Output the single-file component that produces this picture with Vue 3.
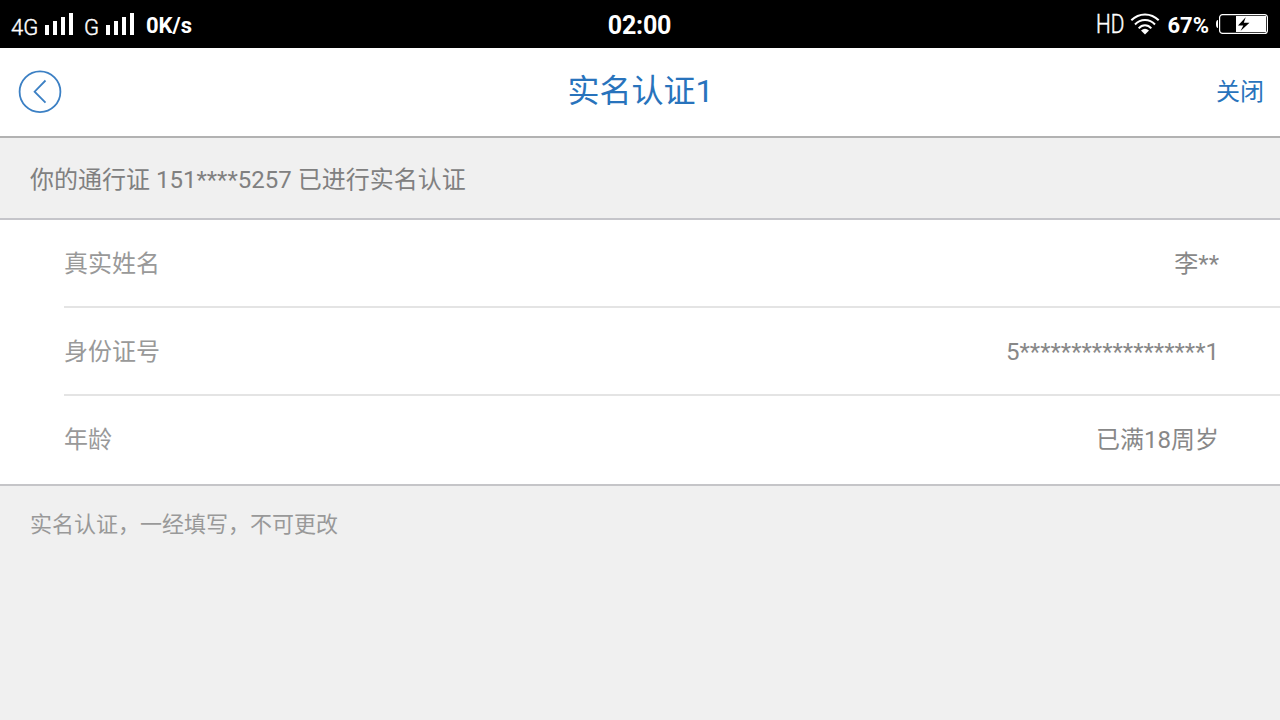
<template>
  <div class="screen">
    <header class="status">
      <div class="status-left">
        <span class="net net-4g">4G</span>
        <svg class="signal" width="29" height="22" viewBox="0 0 29 22">
          <path d="M0 12h4v10H0zM8 8h4v14H8zM16 4h4v18h-4zM24 0h4v22h-4z" />
        </svg>
        <span class="net net-g">G</span>
        <svg class="signal" width="29" height="22" viewBox="0 0 29 22">
          <path d="M0 12h4v10H0zM8 8h4v14H8zM16 4h4v18h-4zM24 0h4v22h-4z" />
        </svg>
        <span class="speed">0K/s</span>
      </div>
      <div class="clock">02:00</div>
      <div class="status-right">
        <span class="hd">HD</span>
        <svg class="wifi" width="30" height="22" viewBox="0 0 30 22">
          <g fill="none" stroke="#fff" stroke-width="2">
            <path d="M1.3 7.3C9 -.6 21 -.6 28.7 7.3" />
            <path d="M5 11.5C10.6 5.6 19.4 5.6 25 11.5" />
            <path d="M8.7 15.4C12.3 11.3 17.7 11.3 21.3 15.4" />
          </g>
          <path d="M11 17.6Q15 14 19 17.6L15 21.5z" fill="#fff" />
        </svg>
        <span class="percent">67%</span>
        <svg class="battery" width="52" height="22" viewBox="0 0 52 22">
          <path d="M2 7Q0 7 0 11T2 15z" fill="#fff" />
          <rect x="3.6" y="1.6" width="47.8" height="18.8" rx="3" fill="none" stroke="#fff" stroke-width="1.2" />
          <path d="M20 3h30v16H20z" fill="#fff" />
          <path d="M29.7 4.2L22 12.4h5.3L24.5 18L33.5 9.7h-5.7z" fill="#000" />
        </svg>
      </div>
    </header>

    <nav class="navbar">
      <button class="back" aria-label="返回">
        <svg width="44" height="44" viewBox="0 0 44 44">
          <circle cx="22" cy="21.7" r="20.4" />
          <path d="M27.5 10.5L16.6 21.7L27.5 32.7" />
        </svg>
      </button>
      <h1 class="title">实名认证1</h1>
      <button class="close">关闭</button>
    </nav>

    <p class="notice">你的通行证 151****5257 已进行实名认证</p>

    <ul class="list">
      <li v-for="row in rows" :key="row.label" class="row">
        <span class="label">{{ row.label }}</span>
        <span class="value">{{ row.value }}</span>
      </li>
    </ul>

    <p class="hint">实名认证，一经填写，不可更改</p>
  </div>
</template>

<script setup>
const rows = [
  { label: "真实姓名", value: "李**" },
  { label: "身份证号", value: "5" + "*".repeat(18) + "1" },
  { label: "年龄", value: "已满18周岁" },
];
</script>

<style>
body {
  margin: 0;
  background: #f0f0f0;
}
</style>

<style scoped>
.screen {
  height: 720px;
  overflow: hidden;
  background: #f0f0f0;
  font-family: Roboto, "Noto Sans CJK SC", sans-serif;
}

.status {
  display: grid;
  grid-template-rows: 48px;
  grid-template-columns: 1fr auto 1fr;
  align-items: center;
  box-sizing: border-box;
  height: 48px;
  padding: 0 12px 0 11px;
  background: #000;
  color: #fff;
  line-height: 48px;
}

.status-left,
.status-right {
  display: flex;
  align-items: center;
  height: 48px;
}

.status-right {
  justify-content: flex-end;
}

.net {
  height: 48px;
  padding-top: 7px;
  box-sizing: border-box;
  font-size: 22px;
  font-weight: 300;
  line-height: 42px;
  -webkit-text-stroke: 0.4px #fff;
}

.net-4g {
  width: 34px;
}

.net-g {
  width: 22px;
  margin-left: 10px;
}

.signal {
  fill: #fff;
}

.speed {
  margin-left: 11px;
  padding-top: 4px;
  font-size: 22px;
  font-weight: 700;
}

.clock {
  padding-top: 4px;
  font-size: 25px;
  font-weight: 700;
  letter-spacing: -0.2px;
}

.hd {
  font-size: 26px;
  font-weight: 300;
  transform: scaleX(0.8);
  transform-origin: right;
  -webkit-text-stroke: 0.5px #fff;
}

.wifi {
  margin-left: 6px;
}

.percent {
  margin-left: 7px;
  padding-top: 4px;
  font-size: 22px;
  font-weight: 700;
}

.battery {
  margin-left: 7px;
}

.navbar {
  display: grid;
  grid-template-columns: 1fr auto 1fr;
  align-items: center;
  box-sizing: border-box;
  height: 90px;
  padding: 0 17px 0 18px;
  border-bottom: 2px solid #b2b2b2;
  background: #fff;
  color: #2873bc;
}

.navbar button {
  padding: 0;
  border: 0;
  background: none;
  color: inherit;
  font: inherit;
}

.back {
  justify-self: start;
  height: 44px;
}

.back svg {
  display: block;
  fill: none;
  stroke: #3c80c4;
  stroke-width: 1.8;
}

.title {
  height: 88px;
  margin: 0;
  font-size: 32px;
  font-weight: 400;
  line-height: 86px;
}

.navbar .close {
  justify-self: end;
  height: 88px;
  margin-right: -1px;
  font-size: 24px;
  line-height: 88px;
}

.notice {
  box-sizing: border-box;
  height: 82px;
  margin: 0;
  padding: 0 30px;
  border-bottom: 2px solid #c5c5ca;
  color: #808080;
  font-size: 24px;
  line-height: 84px;
}

.list {
  margin: 0;
  padding: 0 0 0 64px;
  border-bottom: 2px solid #c5c5c8;
  background: #fff;
  list-style: none;
}

.row {
  display: flex;
  justify-content: space-between;
  box-sizing: border-box;
  height: 88px;
  padding-right: 61px;
  border-bottom: 2px solid #e4e4e4;
  font-size: 24px;
  line-height: 88px;
}

.row:last-child {
  border-bottom: 0;
}

.label {
  color: #999;
}

.value {
  color: #888;
}

.hint {
  margin: 0;
  padding: 0 30px;
  color: #999;
  font-size: 22px;
  line-height: 78px;
}
</style>
